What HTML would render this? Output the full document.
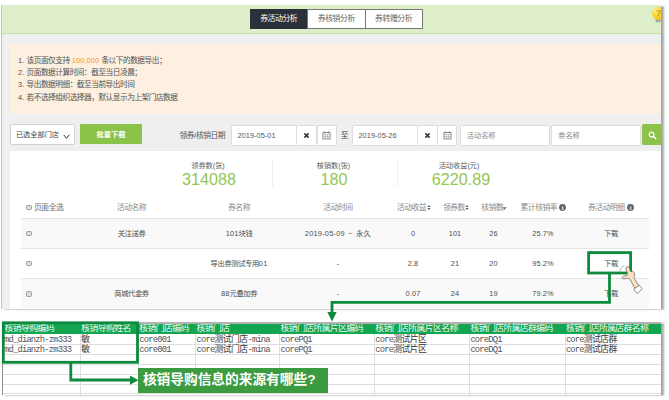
<!DOCTYPE html>
<html lang="zh-CN">
<head>
<meta charset="utf-8">
<title>券活动分析</title>
<style>
*{box-sizing:border-box;margin:0;padding:0}
html,body{width:669px;height:400px;background:#fff;overflow:hidden}
body{position:relative;font-family:"Liberation Sans","Noto Sans CJK SC",sans-serif;font-size:7.2px;color:#444;-webkit-font-smoothing:antialiased}
.abs,.abs>*{position:absolute}
.t{position:absolute;white-space:nowrap;line-height:10px;height:10px}
.n{font-size:7.7px;letter-spacing:-0.5px;color:#505050}
.n i{font-style:normal;letter-spacing:0.1px;font-size:7.4px}
.k{font-size:7.75px;letter-spacing:-0.5px}
.k i{font-style:normal;letter-spacing:.1px;font-size:7.5px}
.c{transform:translateX(-50%);text-align:center}
#p1{position:absolute;left:1px;top:4.6px;width:660px;height:304.2px;background:#efefef;box-shadow:3px 0.8px 1.6px rgba(0,0,0,.36);border-left:1px solid #c2c2c2;overflow:hidden}
#p1 .in{position:absolute;left:-2px;top:-4.6px;width:669px;height:400px}
#bar{position:absolute;left:0;top:4px;width:661px;height:30px;background:#ddeec8;border-bottom:1px solid #c4e1a6}
.tab{position:absolute;top:9.2px;height:20px;line-height:18.4px;text-align:center;font-size:7.9px;letter-spacing:-0.5px;background:#fff;color:#666;border:1px solid #777}
#notice{position:absolute;left:10.2px;top:44px;width:652px;height:70px;background:#fef0e0}
.inp{position:absolute;top:125px;height:21px;background:#fff;border:1px solid #dcdcdc;border-radius:1.5px;font-size:7.45px;line-height:20.2px;padding-left:5.2px;color:#585858}
.ph{color:#8a8a8a;font-size:7.2px}
#white{position:absolute;left:10.2px;top:151px;width:652px;height:160px;background:#fff}
.num{position:absolute;top:171.2px;font-size:17px;line-height:18px;color:#93c755;white-space:nowrap;transform:translateX(-50%) scaleX(.95)}
.lab{position:absolute;top:160.5px;font-size:7.2px;line-height:10px;color:#606060;white-space:nowrap;transform:translateX(-50%)}
.vd{position:absolute;top:161px;width:1px;height:26px;background:#efefef}
.row{position:absolute;left:20.5px;width:628px;height:30px;border-top:1px solid #e4e4e4}
.row.g{background:#f9f9f9}
.cb{position:absolute;left:26px;width:5.6px;height:5.6px;border:0.8px solid #9c9c9c;border-radius:1.5px;background:#dedede}
.th{color:#8a8a8a}
.th.k{font-size:7.85px;letter-spacing:-0.5px}
.td{color:#4e4e4e;letter-spacing:.12px;font-size:7.35px}
.td.k{letter-spacing:-0.45px}

#p2{position:absolute;left:2px;top:322px;width:659px;height:72.7px;background:#fff;box-shadow:3px 0.8px 1.6px rgba(0,0,0,.36);border-top:2px solid #b2b2b2;border-left:1px solid #8c8c8c;overflow:hidden}
#p2 .in{position:absolute;left:-3px;top:-324px;width:669px;height:400px}
#xh{position:absolute;left:2.4px;top:323px;width:660px;height:11px;background:#13a550}
.hl{position:absolute;height:1px;left:2.4px;width:660px;background:#dedede}
.vl{position:absolute;width:1px;top:333.5px;height:62px;background:#dedede}
.vh{display:none}
.x{position:absolute;white-space:nowrap;font-family:"Liberation Mono","Noto Sans CJK SC",sans-serif;font-size:8.8px;letter-spacing:-0.55px;line-height:10px;height:10px;color:#333}
.x.h{color:#f2fbf5}
.x .m,.x.m{font-family:"Liberation Mono",monospace;font-size:8.8px;letter-spacing:-0.8px;color:#525252}
.gbox{position:absolute;border:2.6px solid #0e8a3e}
.gl{position:absolute;background:#0e8a3e}
</style>
</head>
<body>
<div id="p1"><div class="in">
  <div id="bar"></div>
  <div class="tab k" style="left:250px;width:57.4px;background:#2a313b;border-color:#2a313b;color:#fff">券活动分析</div>
  <div class="tab k" style="left:307px;width:58.6px">券核销分析</div>
  <div class="tab k" style="left:364.6px;width:58px">券转赠分析</div>

  <div id="notice"></div>
  <div id="white"></div>
  <div class="t n" style="left:18px;top:55.8px"><i>1. </i>该页面仅支持<i> </i><i style="color:#f6932a">100,000</i><i> </i>条以下的数据导出；</div>
  <div class="t n" style="left:18px;top:68.1px"><i>2. </i>页面数据计算时间：截至当日凌晨；</div>
  <div class="t n" style="left:18px;top:80.4px"><i>3. </i>导出数据明细：截至当前导出时间</div>
  <div class="t n" style="left:18px;top:92.7px"><i>4. </i>若不选择组织选择器，默认显示为上架门店数据</div>

  <div class="inp" style="left:10.3px;top:124px;width:64.6px;height:21px;color:#444;padding-left:4.6px;line-height:19.8px;font-size:7.2px;border-color:#d2d2d2">已选全部门店</div>
  <svg style="position:absolute;left:63px;top:133.5px" width="7" height="5.5" viewBox="0 0 7 5.5"><path d="M0.7 0.8 L3.5 4.3 L6.3 0.8" fill="none" stroke="#333" stroke-width="1"/></svg>
  <div style="position:absolute;left:80.2px;top:124px;width:61.7px;height:19.8px;background:#8bc34a;color:#fff;font-weight:bold;text-align:center;line-height:21.5px;font-size:7.3px;border-radius:1px">批量下载</div>
  <div class="t k" style="left:179.4px;top:130.7px;color:#555">领券<i>/</i>核销日期</div>
  <div class="inp" style="left:231.3px;width:65.6px">2019-05-01</div>
  <div class="inp" style="left:296.4px;width:20.6px;padding:0"></div>
  <div class="inp" style="left:316.5px;width:20px;padding:0"></div>
  <div class="t k" style="left:340.8px;top:130.7px;color:#444">至</div>
  <div class="inp" style="left:352.3px;width:65.4px">2019-05-26</div>
  <div class="inp" style="left:417.2px;width:20.4px;padding:0"></div>
  <div class="inp" style="left:437.1px;width:20.2px;padding:0"></div>
  <div class="inp ph" style="left:459.8px;width:90px;padding-left:6px">活动名称</div>
  <div class="inp ph" style="left:551.2px;width:89.6px;padding-left:6px">券名称</div>
  <div style="position:absolute;left:642.2px;top:124px;width:22px;height:21px;background:#8bc34a;border-radius:1.5px 0 0 1.5px"></div>

<svg style="position:absolute;left:303.1px;top:131.5px" width="7" height="7" viewBox="-3.5 -3.5 7 7"><path d="M-2.1 -2.1 L2.1 2.1 M2.1 -2.1 L-2.1 2.1" stroke="#333" stroke-width="1.5" fill="none"/></svg>
<svg style="position:absolute;left:321.8px;top:130.5px" width="9" height="9" viewBox="-4.5 -4.5 9 9"><rect x="-3.6" y="-2.9" width="7.2" height="6.4" fill="none" stroke="#7a7a7a" stroke-width="0.8"/><path d="M-3.6 -1.1 H3.6 M-3.6 1.2 H3.6 M-1.2 -1.1 V3.5 M1.2 -1.1 V3.5" stroke="#9a9a9a" stroke-width="0.6" fill="none"/><path d="M-1.9 -4 V-2.4 M1.9 -4 V-2.4" stroke="#6a6a6a" stroke-width="1" fill="none"/></svg>
<svg style="position:absolute;left:423.7px;top:131.5px" width="7" height="7" viewBox="-3.5 -3.5 7 7"><path d="M-2.1 -2.1 L2.1 2.1 M2.1 -2.1 L-2.1 2.1" stroke="#333" stroke-width="1.5" fill="none"/></svg>
<svg style="position:absolute;left:442.5px;top:130.5px" width="9" height="9" viewBox="-4.5 -4.5 9 9"><rect x="-3.6" y="-2.9" width="7.2" height="6.4" fill="none" stroke="#7a7a7a" stroke-width="0.8"/><path d="M-3.6 -1.1 H3.6 M-3.6 1.2 H3.6 M-1.2 -1.1 V3.5 M1.2 -1.1 V3.5" stroke="#9a9a9a" stroke-width="0.6" fill="none"/><path d="M-1.9 -4 V-2.4 M1.9 -4 V-2.4" stroke="#6a6a6a" stroke-width="1" fill="none"/></svg>
<svg style="position:absolute;left:648.2px;top:130.6px" width="9" height="9" viewBox="0 0 9 9"><circle cx="3.6" cy="3.6" r="2.4" fill="none" stroke="#fff" stroke-width="1.3"/><path d="M5.4 5.4 L7.8 7.8" stroke="#fff" stroke-width="1.5" stroke-linecap="round"/></svg>
<svg style="position:absolute;left:426.8px;top:205.3px" width="4" height="5.2" viewBox="0 0 4 5.2"><path d="M0.2 2.1 L2 0.1 L3.8 2.1 Z M0.2 3.1 L2 5.1 L3.8 3.1 Z" fill="#6a6a6a"/></svg>
<svg style="position:absolute;left:464.8px;top:205.3px" width="4" height="5.2" viewBox="0 0 4 5.2"><path d="M0.2 2.1 L2 0.1 L3.8 2.1 Z M0.2 3.1 L2 5.1 L3.8 3.1 Z" fill="#6a6a6a"/></svg>
<svg style="position:absolute;left:502.2px;top:206.70000000000002px" width="5" height="3" viewBox="0 0 5 3"><path d="M0.3 0.2 L4.7 0.2 L2.5 2.7 Z" fill="#6a6a6a"/></svg>
<svg style="position:absolute;left:559.1px;top:203.5px" width="7" height="7" viewBox="-3.5 -3.5 7 7"><circle r="3.4" fill="#636363"/><text x="0" y="2.1" text-anchor="middle" font-family="Liberation Serif,serif" font-weight="bold" font-size="6" fill="#fff">i</text></svg>
<svg style="position:absolute;left:627.1px;top:203.5px" width="7" height="7" viewBox="-3.5 -3.5 7 7"><circle r="3.4" fill="#636363"/><text x="0" y="2.1" text-anchor="middle" font-family="Liberation Serif,serif" font-weight="bold" font-size="6" fill="#fff">i</text></svg>
<svg style="position:absolute;left:650px;top:6px" width="14" height="18" viewBox="650 6 14 18"><defs><radialGradient id="bg" cx="0.35" cy="0.3" r="0.75"><stop offset="0" stop-color="#fff3a0"/><stop offset="0.45" stop-color="#fcd93a"/><stop offset="1" stop-color="#f2b91a"/></radialGradient></defs><rect x="655.6" y="19" width="5" height="3.3" rx="0.8" fill="#a5a5a5"/><circle cx="658.6" cy="13.4" r="6.5" fill="url(#bg)"/><text x="658.4" y="16.4" text-anchor="middle" font-family="Liberation Sans,sans-serif" font-weight="bold" font-size="8.6" fill="#c9950f">?</text></svg>
  <div class="lab" style="left:208px">领券数(张)</div>
  <div class="num" style="left:209px">314088</div>
  <div class="vd" style="left:271.7px"></div>
  <div class="lab" style="left:333.5px">核销数(张)</div>
  <div class="num" style="left:334px">180</div>
  <div class="vd" style="left:397px"></div>
  <div class="lab" style="left:459px">活动收益(元)</div>
  <div class="num" style="left:460.5px">6220.89</div>

  <div class="row g" style="top:217.7px"></div>
  <div class="row" style="top:247.8px"></div>
  <div class="row g" style="top:278.4px"></div>

  <div class="cb" style="top:204.7px"></div>
  <div class="cb" style="top:230.8px"></div>
  <div class="cb" style="top:260.8px"></div>
  <div class="cb" style="top:291.3px"></div>

  <div class="t th k" style="left:34px;top:202.5px;color:#6e6e6e">页面全选</div>
  <div class="t th c k" style="left:131.5px;top:202.5px">活动名称</div>
  <div class="t th c k" style="left:239px;top:202.5px">券名称</div>
  <div class="t th c k" style="left:338px;top:202.5px">活动时间</div>
  <div class="t th k" style="left:396.8px;top:202.5px">活动收益</div>
  <div class="t th k" style="left:442.9px;top:202.5px">领券数</div>
  <div class="t th k" style="left:481.3px;top:202.5px">核销数</div>
  <div class="t th k" style="left:520.5px;top:202.5px">累计核销率</div>
  <div class="t th k" style="left:588px;top:202.5px">券活动明细</div>

  <div class="t td c k" style="left:131.5px;top:228.5px">关注送券</div>
  <div class="t td c k" style="left:239px;top:228.5px"><i>101</i>块钱</div>
  <div class="t td c" style="left:338px;top:228.5px"><span style="word-spacing:1px;letter-spacing:.25px">2019-05-09 ~ 永久</span></div>
  <div class="t td c" style="left:413px;top:228.5px">0</div>
  <div class="t td c" style="left:455px;top:228.5px">101</div>
  <div class="t td c" style="left:493.5px;top:228.5px">26</div>
  <div class="t td c" style="left:543px;top:228.5px">25.7%</div>
  <div class="t td c k" style="left:611px;top:228.5px">下载</div>

  <div class="t td c k" style="left:239px;top:258.5px">导出券测试专用<i>01</i></div>
  <div class="t td c" style="left:338px;top:258.5px">-</div>
  <div class="t td c" style="left:413px;top:258.5px">2.8</div>
  <div class="t td c" style="left:455px;top:258.5px">21</div>
  <div class="t td c" style="left:493.5px;top:258.5px">20</div>
  <div class="t td c" style="left:543px;top:258.5px">95.2%</div>
  <div class="t td c k" style="left:611px;top:258.5px">下载</div>

  <div class="t td c k" style="left:131.5px;top:289px">商城代金券</div>
  <div class="t td c k" style="left:239px;top:289px"><i>88</i>元叠加券</div>
  <div class="t td c" style="left:338px;top:289px">-</div>
  <div class="t td c" style="left:413px;top:289px">0.07</div>
  <div class="t td c" style="left:455px;top:289px">24</div>
  <div class="t td c" style="left:493.5px;top:289px">19</div>
  <div class="t td c" style="left:543px;top:289px">79.2%</div>
  <div class="t td c k" style="left:611px;top:289px">下载</div>
</div></div>
<div id="p2"><div class="in">
  <div id="xh"></div>
  <div class="hl" style="top:343.6px"></div>
  <div class="hl" style="top:353.7px"></div>
  <div class="hl" style="top:363.8px"></div>
  <div class="hl" style="top:373.5px"></div>
  <div class="hl" style="top:383.5px"></div>
  <div class="hl" style="top:393.4px"></div>
  <div class="vl" style="left:79.8px"></div><div class="vh" style="left:79.8px"></div>
  <div class="vl" style="left:137.9px"></div><div class="vh" style="left:137.9px"></div>
  <div class="vl" style="left:195.1px"></div><div class="vh" style="left:195.1px"></div>
  <div class="vl" style="left:279.1px"></div><div class="vh" style="left:279.1px"></div>
  <div class="vl" style="left:373.9px"></div><div class="vh" style="left:373.9px"></div>
  <div class="vl" style="left:469.0px"></div><div class="vh" style="left:469.0px"></div>
  <div class="vl" style="left:564.5px"></div><div class="vh" style="left:564.5px"></div>
  <div class="x h" style="left:4.6px;top:324.1px">核销导购编码</div>
  <div class="x h" style="left:81.2px;top:324.1px">核销导购姓名</div>
  <div class="x h" style="left:139.3px;top:324.1px">核销门店编码</div>
  <div class="x h" style="left:196.5px;top:324.1px">核销门店</div>
  <div class="x h" style="left:280.5px;top:324.1px">核销门店所属片区编码</div>
  <div class="x h" style="left:375.3px;top:324.1px">核销门店所属片区名称</div>
  <div class="x h" style="left:470.4px;top:324.1px">核销门店所属店群编码</div>
  <div class="x h" style="left:565.9px;top:324.1px">核销门店所属店群名称</div>
  <div class="x" style="left:4.0px;top:335.0px"><span class="m">md_dianzh-zm333</span></div>
  <div class="x" style="left:81.2px;top:335.0px">敏</div>
  <div class="x" style="left:139.3px;top:335.0px"><span class="m">core001</span></div>
  <div class="x" style="left:196.5px;top:335.0px"><span class="m">core</span>测试门店<span class="m">-mina</span></div>
  <div class="x" style="left:280.5px;top:335.0px"><span class="m">corePQ1</span></div>
  <div class="x" style="left:375.3px;top:335.0px"><span class="m">core</span>测试片区</div>
  <div class="x" style="left:470.4px;top:335.0px"><span class="m">coreDQ1</span></div>
  <div class="x" style="left:565.9px;top:335.0px"><span class="m">core</span>测试店群</div>
  <div class="x" style="left:4.0px;top:345.1px"><span class="m">md_dianzh-zm333</span></div>
  <div class="x" style="left:81.2px;top:345.1px">敏</div>
  <div class="x" style="left:139.3px;top:345.1px"><span class="m">core001</span></div>
  <div class="x" style="left:196.5px;top:345.1px"><span class="m">core</span>测试门店<span class="m">-mina</span></div>
  <div class="x" style="left:280.5px;top:345.1px"><span class="m">corePQ1</span></div>
  <div class="x" style="left:375.3px;top:345.1px"><span class="m">core</span>测试片区</div>
  <div class="x" style="left:470.4px;top:345.1px"><span class="m">coreDQ1</span></div>
  <div class="x" style="left:565.9px;top:345.1px"><span class="m">core</span>测试店群</div>
</div></div>
<svg style="position:absolute;left:0;top:0" width="669" height="400" viewBox="0 0 669 400">
<g fill="none" stroke="#0e8a3e" stroke-width="2.8" stroke-linejoin="miter">
<rect x="588.6" y="252.6" width="42" height="20.4"/>
<path d="M609.5 273 V302.3 H332 V313"/>
<rect x="3.3" y="322.8" width="134.2" height="39.5"/>
<path d="M70.8 362.4 V380 H131.5"/>
</g>
<path d="M327.3 312 H336.7 L332 321.4 Z" fill="#0e8a3e"/>
<path d="M130 375.6 V384.8 L138.4 380.2 Z" fill="#0e8a3e"/>
</svg>
<div style="position:absolute;left:138.3px;top:368px;width:189.5px;height:24.6px;background:#3b9b41;color:#fff;font-weight:bold;font-size:13.7px;line-height:23.6px;padding-left:4.6px;white-space:nowrap;font-family:'Liberation Sans','Noto Sans CJK SC',sans-serif">核销导购信息的来源有哪些?</div>
<svg style="position:absolute;left:616px;top:262px" width="30" height="34" viewBox="616 262 30 34">
<path d="M624.2 265.8 Q620.8 267.2 620 270 L620.5 272.8" fill="none" stroke="#8a8a8a" stroke-width="0.6"/>
<path d="M625.9 268.6 Q625.9 266.2 627.8 266.5 Q629.3 266.8 629.8 269 L630.6 271.7 Q633 270.6 634.3 272.6 Q635.4 275 634 277.8 L638.9 286 L634.9 288.6 L630.3 279.8 Q629 278.2 627.4 278.3 L623.8 279 Q621.8 278.8 622.3 277.1 Q622.9 276 625 275.8 L626.8 275.4 Q627.7 274.6 627.3 273 Z" fill="#fbe0c4" stroke="#4a4a4a" stroke-width="0.6" stroke-linejoin="round"/>
<path d="M633.8 289 L639.4 285.3 L642 288.4 L640.6 290.6 L637 293.6 L635.4 291.6 Z" fill="#fff" stroke="#4a4a4a" stroke-width="0.6" stroke-linejoin="round"/>
</svg>
</body>
</html>
